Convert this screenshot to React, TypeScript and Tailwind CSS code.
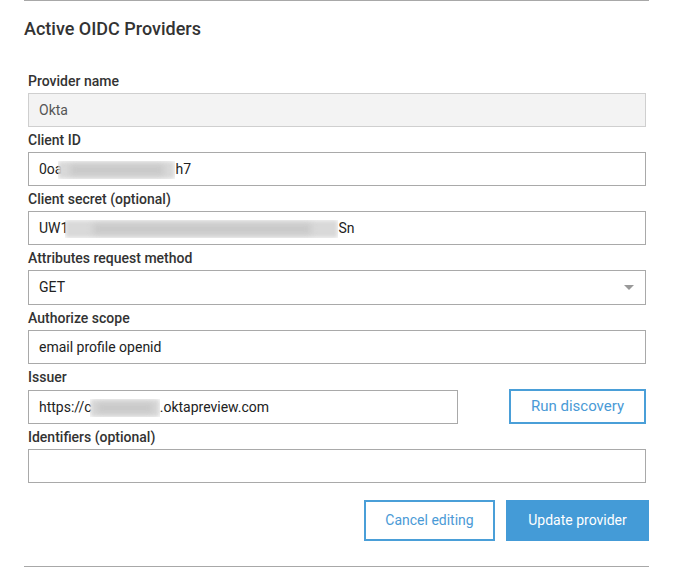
import React from "react";

const font = { fontFamily: "Roboto, 'Liberation Sans', sans-serif" };

function Blur({ w }: { w: number }) {
  return (
    <span className="relative inline-block h-[18px] align-middle overflow-hidden" style={{ width: w }}>
      <span className="absolute inset-0 bg-[#d9d9d9] blur-[2px]" />
      <span className="absolute inset-y-[4px] left-[10%] right-[10%] bg-[#c8c8c8] blur-[3px]" />
    </span>
  );
}

function Label({ children }: { children: React.ReactNode }) {
  return <div className="h-5 text-[14px] leading-5 font-medium text-[#333] mb-[2px]">{children}</div>;
}

function Field({ label, children, last }: { label: string; children: React.ReactNode; last?: boolean }) {
  return (
    <div className={last ? "" : "mb-[3px]"}>
      <Label>{label}</Label>
      {children}
    </div>
  );
}

function Input({ children, disabled, className = "" }: { children?: React.ReactNode; disabled?: boolean; className?: string }) {
  return (
    <div
      className={`h-[34px] border border-[#a9a9a9] flex items-center px-[10px] text-[14px] whitespace-nowrap overflow-hidden ${
        disabled ? "bg-[#f3f3f3] text-[#555] border-[#cfcfcf]" : "bg-white text-[#222]"
      } ${className}`}
    >
      {children}
    </div>
  );
}

export default function App() {
  return (
    <div className="w-[674px] h-[568px] bg-white relative" style={font}>
      <div className="ml-[24px] w-[625px] border-t border-[#a8a8a8]">
        <div className="pt-[16px] h-[66px] text-[18px] leading-[24px] font-medium text-[#333]">Active OIDC Providers</div>
        <div className="pl-[4px] pr-[3px] pt-[4px]">
          <Field label="Provider name">
            <Input disabled>Okta</Input>
          </Field>
          <Field label="Client ID">
            <Input>
              <span>0oa</span>
              <span className="-ml-[4px]"><Blur w={117} /></span>
              <span>h7</span>
            </Input>
          </Field>
          <Field label="Client secret (optional)">
            <Input>
              <span>UW1</span>
              <span className="-ml-[3px]"><Blur w={273} /></span>
              <span>Sn</span>
            </Input>
          </Field>
          <Field label="Attributes request method">
            <div className="h-[35px] border border-[#a9a9a9] flex items-center justify-between px-[10px] text-[14px] text-[#222]">
              <span>GET</span>
              <span className="w-0 h-0 border-l-[5px] border-r-[5px] border-t-[5px] border-l-transparent border-r-transparent border-t-[#999] mr-[1px]" />
            </div>
          </Field>
          <Field label="Authorize scope">
            <Input>email profile openid</Input>
          </Field>
          <Field label="Issuer">
            <div className="flex items-start justify-between">
              <Input className="w-[430px] mt-[1px]">
                <span>https://c</span>
                <span className="-ml-[2px]"><Blur w={70} /></span>
                <span>.oktapreview.com</span>
              </Input>
              <button className="w-[137px] h-[35px] border-2 border-[#4a9fd8] text-[#4a9ad6] text-[15px] bg-white">
                Run discovery
              </button>
            </div>
          </Field>
          <Field label="Identifiers (optional)" last>
            <Input />
          </Field>
        </div>
        <div className="flex justify-end gap-[11px] mt-[17px]">
          <button className="w-[131px] h-[41px] border-2 border-[#4a9fd8] text-[#4a9ad6] text-[14px] bg-white">
            Cancel editing
          </button>
          <button className="w-[143px] h-[41px] bg-[#449bd7] text-white text-[14px]">Update provider</button>
        </div>
        <div className="mt-[25px] border-t border-[#a8a8a8]" />
      </div>
    </div>
  );
}
